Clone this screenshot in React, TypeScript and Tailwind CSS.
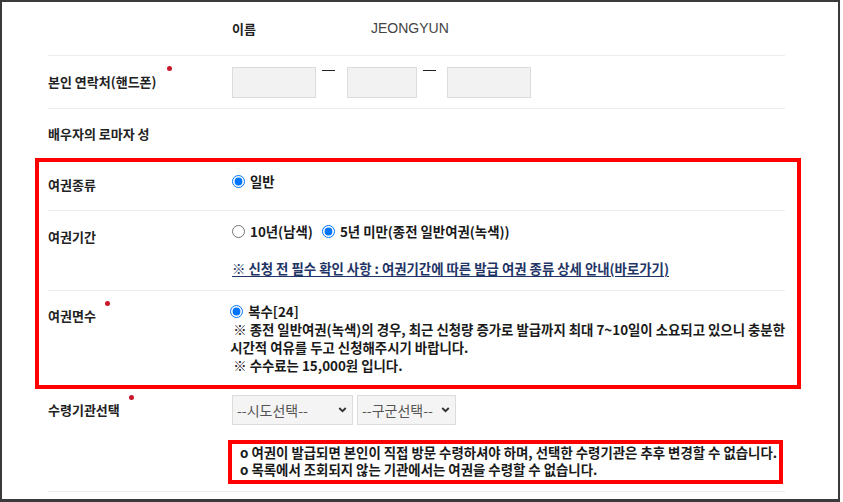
import React from 'react';

const Divider: React.FC = () => <div className="h-px bg-[#ececec]" />;

const Dot: React.FC<{ className: string }> = ({ className }) => (
    <span className={`absolute h-[5px] w-[5px] rounded-full bg-[#c8182c] ${className}`} />
);

const Radio: React.FC<{ checked?: boolean; label: string; className?: string }> = ({ checked, label, className }) => (
    <label className={`flex items-center ${className ?? ''}`}>
        <input type="radio" checked={!!checked} readOnly className="m-0 h-[13px] w-[13px] accent-[#0075ff]" />
        <span className="ml-[5px]">{label}</span>
    </label>
);

const Chevron: React.FC<{ className: string }> = ({ className }) => (
    <svg viewBox="0 0 10 7" className={`pointer-events-none absolute top-[12px] h-[6px] w-[9px] ${className}`}>
        <path d="M1.2 1.2 5 5 8.8 1.2" fill="none" stroke="#333" strokeWidth="2.2" />
    </svg>
);

const App: React.FC = () => {
    return (
        <div className="h-[502px] w-[840px] overflow-hidden border-2 border-b-[3px] border-[#3a3a3a] bg-white font-['Noto_Sans_CJK_KR',sans-serif] text-[#1a1a1a]">
            <div className="ml-[46px] w-[737px]">
                {/* 이름 */}
                <div className="flex h-[53px] items-center">
                    <div className="w-[184px]" />
                    <div className="flex items-center">
                        <span className="w-[139px] text-[13px] font-bold text-[#222]">이름</span>
                        <span className="font-['Liberation_Sans',sans-serif] text-[14px] text-[#444]">JEONGYUN</span>
                    </div>
                </div>
                <Divider />

                {/* 연락처 */}
                <div className="relative flex h-[52px] items-center">
                    <div className="w-[184px] text-[13px] font-bold text-[#222]">본인 연락처(핸드폰)</div>
                    <Dot className="left-[119px] top-[10px]" />
                    <div className="flex items-start">
                        <input className="h-[31px] w-[84px] border border-[#dcdcdc] bg-[#f2f2f2]" />
                        <div className="ml-[6px] mr-[12px] mt-[3px] h-[1.5px] w-[13px] bg-[#222]" />
                        <input className="h-[31px] w-[70px] border border-[#dcdcdc] bg-[#f2f2f2]" />
                        <div className="ml-[6px] mr-[11px] mt-[3px] h-[1.5px] w-[13px] bg-[#222]" />
                        <input className="h-[31px] w-[84px] border border-[#dcdcdc] bg-[#f2f2f2]" />
                    </div>
                </div>
                <Divider />

                {/* 배우자 */}
                <div className="flex h-[49px] items-center">
                    <div className="w-[184px] text-[13px] font-bold text-[#222]">배우자의 로마자 성</div>
                </div>

                {/* 강조 영역 */}
                <div className="-ml-[13px] -mr-[16px] border-4 border-[#ff0000] pl-[9px] pr-[12px]">
                    <div className="flex h-[48px] items-start">
                        <div className="w-[184px] pt-[13px] text-[13px] font-bold leading-[20px] text-[#222]">여권종류</div>
                        <div className="pt-[10px] text-[13.4px] font-bold leading-[18px]">
                            <Radio checked label="일반" />
                        </div>
                    </div>
                    <Divider />
                    <div className="flex h-[79px] items-start">
                        <div className="w-[184px] pt-[16px] text-[13px] font-bold leading-[20px] text-[#222]">여권기간</div>
                        <div className="pt-[11px] text-[13.4px] font-bold leading-[18px]">
                            <div className="flex items-center">
                                <Radio label="10년(남색)" />
                                <Radio checked label="5년 미만(종전 일반여권(녹색))" className="ml-[9px]" />
                            </div>
                            <a className="mt-[19px] block text-[#1f3566] underline underline-offset-2">
                                ※ 신청 전 필수 확인 사항 : 여권기간에 따른 발급 여권 종류 상세 안내(바로가기)
                            </a>
                        </div>
                    </div>
                    <Divider />
                    <div className="relative flex h-[94px] items-start">
                        <div className="w-[184px] pt-[15px] text-[13px] font-bold leading-[20px] text-[#222]">여권면수</div>
                        <Dot className="left-[57px] top-[10px]" />
                        <div className="whitespace-nowrap pt-[11px] text-[13.4px] font-bold leading-[18px]">
                            <Radio checked label="복수[24]" />
                            <p>&nbsp;※ 종전 일반여권(녹색)의 경우, 최근 신청량 증가로 발급까지 최대 7~10일이 소요되고 있으니 충분한</p>
                            <p>시간적 여유를 두고 신청해주시기 바랍니다.</p>
                            <p>&nbsp;※ 수수료는 15,000원 입니다.</p>
                        </div>
                    </div>
                </div>

                {/* 수령기관 */}
                <div className="relative flex items-start pb-[7px]">
                    <div className="w-[184px] pt-[11px] text-[13px] font-bold leading-[20px] text-[#222]">수령기관선택</div>
                    <Dot className="left-[81px] top-[6px]" />
                    <div className="pt-[6px]">
                        <div className="flex gap-[4px]">
                            <div className="relative">
                                <select className="h-[30px] w-[121px] appearance-none border border-[#dcdcdc] bg-[#f4f4f4] pl-[4px] text-[14px] text-[#555] outline-none">
                                    <option>--시도선택--</option>
                                </select>
                                <Chevron className="right-[6px]" />
                            </div>
                            <div className="relative">
                                <select className="h-[30px] w-[99px] appearance-none border border-[#dcdcdc] bg-[#f4f4f4] pl-[4px] text-[14px] text-[#555] outline-none">
                                    <option>--구군선택--</option>
                                </select>
                                <Chevron className="right-[6px]" />
                            </div>
                        </div>
                        <div className="-ml-[4px] mt-[15px] h-[44px] w-[555px] whitespace-nowrap border-4 border-[#ff0000] pl-[8px] text-[13.4px] font-bold leading-[17px]">
                            <p>o 여권이 발급되면 본인이 직접 방문 수령하셔야 하며, 선택한 수령기관은 추후 변경할 수 없습니다.</p>
                            <p>o 목록에서 조회되지 않는 기관에서는 여권을 수령할 수 없습니다.</p>
                        </div>
                    </div>
                </div>
                <Divider />
            </div>
        </div>
    );
};

export default App;
